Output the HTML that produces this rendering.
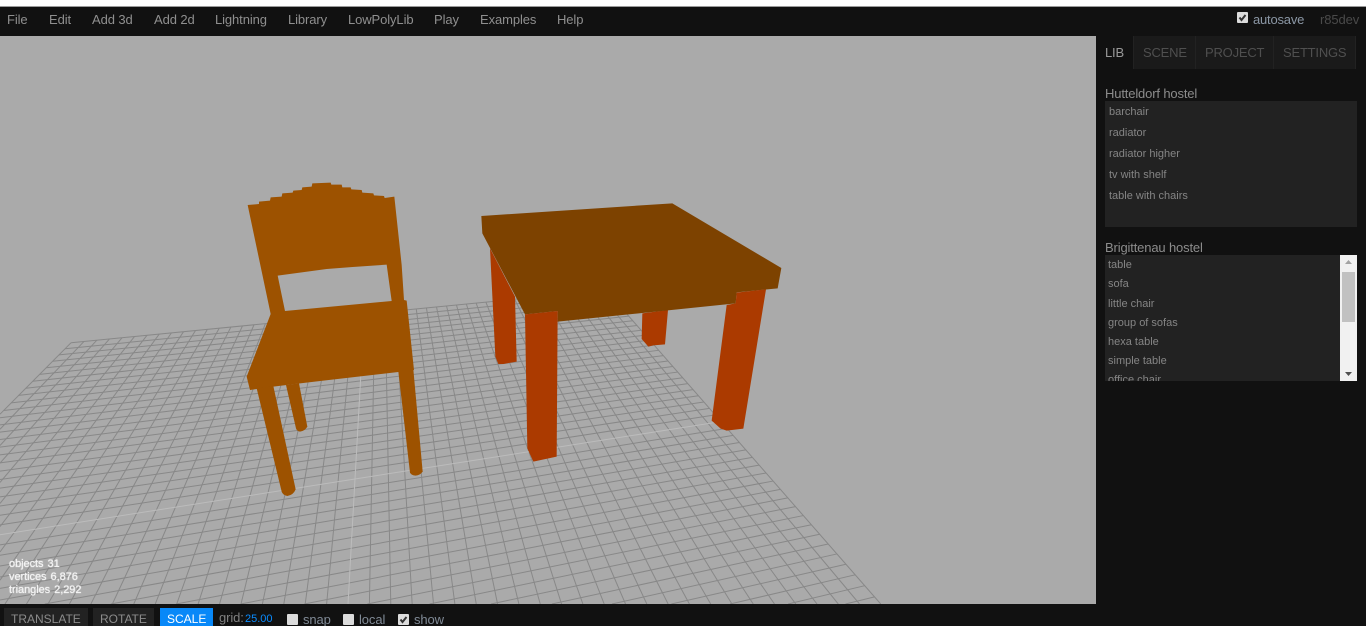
<!DOCTYPE html>
<html lang="en">
<head>
<meta charset="utf-8">
<title>three.js editor</title>
<style>
html,body{margin:0;padding:0;width:1366px;height:626px;overflow:hidden;background:#fff;font-family:"Liberation Sans",Arial,sans-serif}
#root{position:relative;width:1366px;height:626px;overflow:hidden}
.abs,.t{position:absolute}
.t{white-space:pre}
.m{font-size:13px;line-height:16px;top:12px;color:#8f8f8f;letter-spacing:-.1px}
.tab{font-size:13px;line-height:16px;top:45px;color:#4f4f4f;letter-spacing:-.2px}
.h{font-size:13px;line-height:16px;color:#8c8c8c;letter-spacing:-.15px}
.i{font-size:11px;line-height:13px;color:#858585}
.s{font-size:11px;line-height:13px;color:#f4f4f4;left:9px;font-weight:400;text-shadow:0 0 1px #fff;word-spacing:-1px;letter-spacing:-.05px}
.b{font-size:12px;line-height:13px;top:613px;color:#8c8c8c}
.l{font-size:13px;line-height:13px;top:613px;color:#808a96;letter-spacing:-.1px}
.cb{position:absolute;width:11px;height:11px;background:#dcdcdc;border-radius:1px;margin:0;appearance:none;-webkit-appearance:none}
</style>
</head>
<body>
<div id="root">
<div class="abs" style="left:0;top:0;width:1366px;height:6px;background:#fff"></div>
<div class="abs" style="left:0;top:6px;width:1366px;height:1px;background:#9a9a9a"></div>
<div class="abs" style="left:0;top:7px;width:1366px;height:29px;background:#111"></div>

<div class="t m" style="left:7px">File</div>
<div class="t m" style="left:49px">Edit</div>
<div class="t m" style="left:92px">Add 3d</div>
<div class="t m" style="left:154px">Add 2d</div>
<div class="t m" style="left:215px">Lightning</div>
<div class="t m" style="left:288px">Library</div>
<div class="t m" style="left:348px">LowPolyLib</div>
<div class="t m" style="left:434px">Play</div>
<div class="t m" style="left:480px">Examples</div>
<div class="t m" style="left:557px">Help</div>

<input type="checkbox" class="cb" checked style="left:1237px;top:12px">
<svg class="abs" style="left:1237px;top:12px" width="11" height="11"><path d="M2.5 5.5L4.5 8L8.5 3" fill="none" stroke="#333" stroke-width="2"/></svg>
<div class="t m" style="left:1253px;color:#8b97a5;letter-spacing:-.2px">autosave</div>
<div class="t m" style="left:1320px;color:#4a4a4a">r85dev</div>

<svg class="abs" id="view" style="left:0;top:36px;background:#aaa" width="1096" height="568" viewBox="0 36 1096 568">
<g id="grid" fill="none" stroke="#888" stroke-width="1"></g>
<g id="center" fill="none" stroke="#bcbcbc" stroke-width="1"></g>
<g transform="translate(230 170) scale(.33333)" fill="#9d5200">
<path fill-rule="evenodd" d="M53,105 L87,102 87,95 120,92 122,82 155,80 157,70 188,68 190,62 215,60 217,52 245,50 247,40 302,38 304,44 335,44 337,52 362,52 364,58 395,60 397,68 430,70 432,76 462,78 464,84 493,80 515,285 522,390 530,392 552,600 505,606 210,640 130,650 60,660 50,620 122,432 Z M143,317 L290,297 368,291 470,284 485,393 165,423 Z"/>
<path d="M80,655 L130,648 197,958 Q190,975 172,978 Q158,975 155,965 Z"/>
<path d="M168,645 L207,640 232,770 Q225,783 210,785 Q200,783 198,775 Z"/>
<path d="M505,604 L550,598 578,905 Q570,916 557,917 Q544,916 540,908 Z"/>
</g>
<g transform="translate(470 190) scale(.33333)">
<path fill="#ab3a00" d="M60,175 L135,320 140,515 100,522 85,522 76,500 Z"/>
<path fill="#ab3a00" d="M517,370 L594,360 585,463 550,466 535,470 515,447 Z"/>
<path fill="#7d4200" d="M34,78 L607,40 934,234 923,295 800,307 797,340 263,395 263,363 165,373 37,130 Z"/>
<path fill="#ab3a00" d="M165,373 L263,363 260,800 190,815 172,775 Z"/>
<path fill="#ab3a00" d="M800,308 L888,298 820,716 770,722 752,716 725,692 770,345 797,340 Z"/>
</g>
</svg>

<div class="t s" style="top:558px">objects  31</div>
<div class="t s" style="top:571px">vertices  6,876</div>
<div class="t s" style="top:584px">triangles  2,292</div>

<div class="abs" style="left:1096px;top:36px;width:270px;height:590px;background:#111"></div>
<div class="abs" style="left:1096px;top:36px;width:259px;height:33px;background:#1a1a1a"></div>
<div class="abs" style="left:1096px;top:36px;width:37px;height:33px;background:#111"></div>
<div class="abs" style="left:1133px;top:36px;width:1px;height:33px;background:#222"></div>
<div class="abs" style="left:1195px;top:36px;width:1px;height:33px;background:#222"></div>
<div class="abs" style="left:1273px;top:36px;width:1px;height:33px;background:#222"></div>
<div class="abs" style="left:1355px;top:36px;width:1px;height:33px;background:#222"></div>
<div class="t tab" style="left:1105px;color:#999">LIB</div>
<div class="t tab" style="left:1143px">SCENE</div>
<div class="t tab" style="left:1205px">PROJECT</div>
<div class="t tab" style="left:1283px">SETTINGS</div>

<div class="t h" style="left:1105px;top:86px">Hutteldorf hostel</div>
<div class="abs" style="left:1105px;top:101px;width:252px;height:126px;background:#222"></div>
<div class="t i" style="left:1109px;top:106px">barchair</div>
<div class="t i" style="left:1109px;top:127px">radiator</div>
<div class="t i" style="left:1109px;top:148px">radiator higher</div>
<div class="t i" style="left:1109px;top:169px">tv with shelf</div>
<div class="t i" style="left:1109px;top:190px">table with chairs</div>

<div class="t h" style="left:1105px;top:240px">Brigittenau hostel</div>
<div class="abs" style="left:1105px;top:255px;width:252px;height:126px;background:#222;overflow:hidden">
<div class="t i" style="left:3px;top:4px">table</div>
<div class="t i" style="left:3px;top:23px">sofa</div>
<div class="t i" style="left:3px;top:43px">little chair</div>
<div class="t i" style="left:3px;top:62px">group of sofas</div>
<div class="t i" style="left:3px;top:81px">hexa table</div>
<div class="t i" style="left:3px;top:100px">simple table</div>
<div class="t i" style="left:3px;top:113px;height:13px;overflow:hidden;line-height:25px">office chair</div>
</div>
<div class="abs" style="left:1340px;top:255px;width:17px;height:126px;background:#f1f1f1"></div>
<div class="abs" style="left:1342px;top:272px;width:13px;height:50px;background:#c1c1c1"></div>
<svg class="abs" style="left:1340px;top:255px" width="17" height="126"><path d="M5 9H12L8.5 5Z" fill="#a3a3a3"/><path d="M5 117H12L8.5 121Z" fill="#505050"/></svg>

<div class="abs" style="left:0;top:604px;width:1096px;height:22px;background:#111"></div>
<div class="abs" style="left:4px;top:608px;width:84px;height:18px;background:#222"></div>
<div class="abs" style="left:93px;top:608px;width:61px;height:18px;background:#222"></div>
<div class="abs" style="left:160px;top:608px;width:53px;height:18px;background:#0888f8"></div>
<div class="t b" style="left:11px">TRANSLATE</div>
<div class="t b" style="left:100px">ROTATE</div>
<div class="t b" style="left:167px;color:#fff">SCALE</div>
<div class="t" style="left:219px;top:611px;font-size:13px;line-height:14px;color:#808080;letter-spacing:-.1px">grid:</div>
<div class="t" style="left:245px;top:612px;font-size:11px;line-height:14px;color:#0a8cff">25.00</div>

<input type="checkbox" class="cb" style="left:287px;top:614px">
<div class="t l" style="left:303px">snap</div>
<input type="checkbox" class="cb" style="left:343px;top:614px">
<div class="t l" style="left:359px">local</div>
<input type="checkbox" class="cb" checked style="left:398px;top:614px">
<svg class="abs" style="left:398px;top:614px" width="11" height="11"><path d="M2.5 5.5L4.5 8L8.5 3" fill="none" stroke="#333" stroke-width="2"/></svg>
<div class="t l" style="left:414px">show</div>
</div>

<script>
(function(){
  var NS='http://www.w3.org/2000/svg';
  var V2=[3133,43],V1=[380,32],C=[355,479],a=0.00607;
  /* row parameter: rows are spaced along the centre column to follow the measured spacing */
  function T(n){ /* n = rows from back edge, 0..50 */
    var y=1/(1/468-n*2.228e-5)-154;
    return (479-y)/(y-32);
  }
  function P(u,t){
    var s=u*a,w=s+t+1;
    return [(s*V2[0]+t*V1[0]+C[0])/w,(s*V2[1]+t*V1[1]+C[1])/w];
  }
  function clip(p,q){
    var x0=0,y0=36,x1=1096,y1=604,dx=q[0]-p[0],dy=q[1]-p[1],a0=0,a1=1;
    var ps=[-dx,dx,-dy,dy],qs=[p[0]-x0,x1-p[0],p[1]-y0,y1-p[1]];
    for(var i=0;i<4;i++){
      if(ps[i]===0){ if(qs[i]<0) return null; continue; }
      var r=qs[i]/ps[i];
      if(ps[i]<0){ if(r>a0)a0=r; } else { if(r<a1)a1=r; }
    }
    if(a0>=a1) return null;
    return [[p[0]+a0*dx,p[1]+a0*dy],[p[0]+a1*dx,p[1]+a1*dy]];
  }
  function line(g,p,q){
    var c=clip(p,q); if(!c) return;
    var l=document.createElementNS(NS,'line');
    l.setAttribute('x1',c[0][0].toFixed(2));l.setAttribute('y1',c[0][1].toFixed(2));
    l.setAttribute('x2',c[1][0].toFixed(2));l.setAttribute('y2',c[1][1].toFixed(2));
    g.appendChild(l);
  }
  var g=document.getElementById('grid'),c=document.getElementById('center'),i;
  for(i=-25;i<=25;i++){ line(i===0?c:g,P(i,T(0)),P(i,T(50))); }
  for(i=0;i<=50;i++){ line(i===25?c:g,P(-25,T(i)),P(25,T(i))); }
})();
</script>
</body>
</html>
